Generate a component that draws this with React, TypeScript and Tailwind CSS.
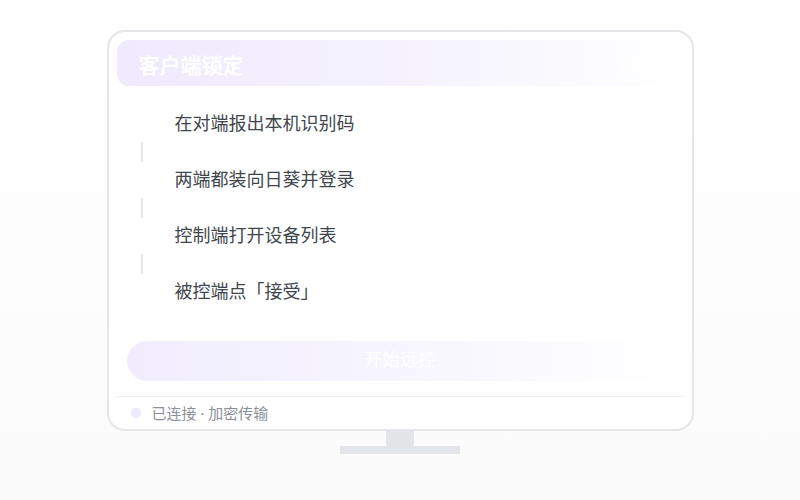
import React from 'react';

const STEPS = ['在对端报出本机识别码', '两端都装向日葵并登录', '控制端打开设备列表', '被控端点「接受」'];

export default function App() {
  return (
    <div
      className="w-[800px] h-[500px] bg-gradient-to-b from-white to-[#fbfbfc] flex flex-col items-center pt-[30px]"
      style={{ fontFamily: '"Noto Sans", "Noto Sans CJK SC", sans-serif' }}
    >
      {/* Monitor */}
      <div className="w-[587px] h-[401px] border-2 border-[#e4e6ea] rounded-[18px] bg-white flex flex-col px-2 pt-2">
        {/* Header */}
        <div className="h-[46px] rounded-[12px] bg-gradient-to-r from-[#efeafe] via-[#f5f2fe] to-white flex items-center justify-between pl-[22px] pr-6 pt-[4px]">
          <span className="text-[21px] font-bold text-white leading-none">客户端锁定</span>
          <span className="text-[14px] text-white leading-none">已锁定</span>
        </div>

        {/* Steps */}
        <ul className="mt-[23px] pl-[13px] flex flex-col">
          {STEPS.map((step, i) => (
            <li key={i} className="flex flex-col">
              <div className="flex items-center gap-[21px] h-8">
                <div className="w-6 h-6 rounded-full bg-white" />
                <span className="text-lg text-[#41464e] leading-none -mt-1">{step}</span>
              </div>
              {i < STEPS.length - 1 && (
                <div className="h-6 w-6 flex justify-center pt-px">
                  <div className="w-0.5 h-5 bg-[#e4e7ec]" />
                </div>
              )}
            </li>
          ))}
        </ul>

        {/* Start button */}
        <button className="mt-8 mx-[10px] h-10 rounded-full bg-gradient-to-r from-[#f1edfe] via-[#f7f5fe] to-white text-white text-lg leading-none pb-1">
          开始远控
        </button>

        {/* Footer */}
        <div className="mt-[15px] border-t border-[#eceef1] h-[33px] flex items-center pl-[15px] gap-[11px] -mx-px">
          <div className="w-[10px] h-[10px] rounded-full bg-[#ede9fe]" />
          <span className="text-[15px] text-[#8c9099] leading-none">已连接 · 加密传输</span>
        </div>
      </div>

      {/* Stand */}
      <div className="w-7 h-[15px] bg-[#e2e5ea]" />
      <div className="w-[120px] h-2 bg-[#e2e5ea]" />
    </div>
  );
}
